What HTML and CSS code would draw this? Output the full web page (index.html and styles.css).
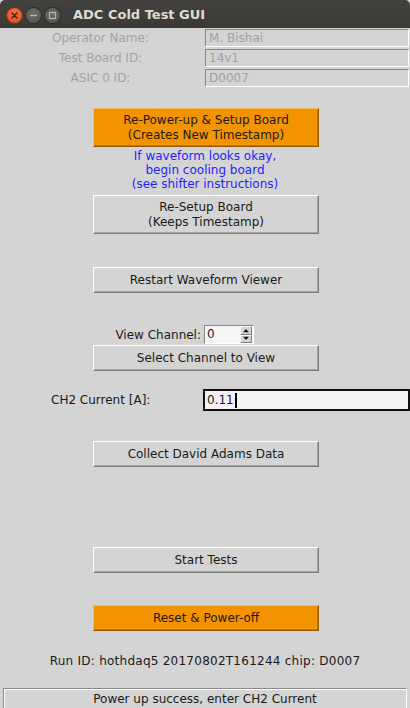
FILE: index.html
```html
<!DOCTYPE html>
<html>
<head>
<meta charset="utf-8">
<link rel="stylesheet" href="styles.css">
</head>
<body>
<div class="window">
  <header class="titlebar">
    <div class="winbtns">
      <span class="wb close"><svg width="15" height="15" viewBox="0 0 15 15"><path d="M5 5 L10 10 M10 5 L5 10" stroke="#3a1a10" stroke-width="1.3" stroke-linecap="round"/></svg></span>
      <span class="wb"><svg width="15" height="15" viewBox="0 0 15 15"><path d="M4 7.5 H11" stroke="#b8b6ae" stroke-width="1.4"/></svg></span>
      <span class="wb"><svg width="15" height="15" viewBox="0 0 15 15"><rect x="4.5" y="4.5" width="6" height="6" fill="none" stroke="#b8b6ae" stroke-width="1.2"/></svg></span>
    </div>
    <span class="title">ADC Cold Test GUI</span>
  </header>
  <main class="content">
    <div class="form">
      <span class="flabel">Operator Name:</span><div class="entry disabled">M. Bishai</div>
      <span class="flabel">Test Board ID:</span><div class="entry disabled">14v1</div>
      <span class="flabel">ASIC 0 ID:</span><div class="entry disabled">D0007</div>
    </div>
    <button class="btn orange tall b1">Re-Power-up &amp; Setup Board<br>(Creates New Timestamp)</button>
    <p class="note">If waveform looks okay,<br>begin cooling board<br>(see shifter instructions)</p>
    <button class="btn tall b2">Re-Setup Board<br>(Keeps Timestamp)</button>
    <button class="btn b3">Restart Waveform Viewer</button>
    <div class="spinrow">
      <span class="spinlabel">View Channel:</span>
      <div class="spinbox">
        <span class="spinval">0</span>
        <span class="arrows">
          <span class="arr"><svg width="10" height="7" viewBox="0 0 10 7"><path d="M1 6 L5 1.5 L9 6 Z" fill="#111"/></svg></span>
          <span class="arr"><svg width="10" height="7" viewBox="0 0 10 7"><path d="M1 1 L5 5.5 L9 1 Z" fill="#111"/></svg></span>
        </span>
      </div>
    </div>
    <button class="btn b4">Select Channel to View</button>
    <div class="currow">
      <span class="curlabel">CH2 Current [A]:</span>
      <div class="entry focus">0.11<span class="caret"></span></div>
    </div>
    <button class="btn b5">Collect David Adams Data</button>
    <button class="btn b6">Start Tests</button>
    <button class="btn orange b7">Reset &amp; Power-off</button>
    <p class="runid">Run ID: hothdaq5 20170802T161244 chip: D0007</p>
    <div class="status">Power up success, enter CH2 Current</div>
  </main>
</div>
</body>
</html>
```

FILE: styles.css
```css
* { box-sizing: border-box; }
html, body { margin: 0; padding: 0; }
body {
  width: 410px;
  height: 708px;
  overflow: hidden;
  background: #d4d4d4;
  font-family: "DejaVu Sans", sans-serif;
  font-size: 12px;
  color: #1a1a1a;
}
.window { display: flex; flex-direction: column; height: 708px; }
.titlebar {
  height: 28px;
  background: linear-gradient(#43423e, #3a3935);
  border-radius: 5px 5px 0 0;
  display: flex;
  align-items: center;
  padding-left: 7px;
  flex-shrink: 0;
}
.winbtns { display: flex; gap: 4px; padding-top: 2px; }
.wb {
  width: 15px; height: 15px;
  border-radius: 50%;
  background: radial-gradient(circle at 50% 35%, #6c6b66, #53524d);
  box-shadow: 0 0 0 1px #2e2d2a;
  display: flex;
}
.wb.close { background: radial-gradient(circle at 50% 35%, #f2774a, #d9471a); box-shadow: 0 0 0 1px #8a2e10; }
.title {
  margin-left: 13px;
  color: #dfdbd2;
  font-weight: bold;
  font-size: 13px;
  padding-top: 1px;
}
.content { display: flex; flex-direction: column; align-items: flex-start; }
.form {
  margin-top: 1px;
  display: grid;
  grid-template-columns: 205px 204px;
  row-gap: 2px;
  width: 410px;
}
.flabel {
  color: #a3a3a3;
  text-align: center;
  line-height: 18px;
  padding-right: 4px;
  white-space: nowrap;
}
.entry {
  height: 18px;
  border: 1px solid;
  border-color: #858585 #ffffff #ffffff #858585;
  padding: 0 3px;
  line-height: 16px;
  font-size: 12px;
}
.entry.disabled { color: #a0a0a0; background: #d4d4d4; }
.btn {
  font-family: "DejaVu Sans", sans-serif;
  font-size: 12px;
  color: #1a1a1a;
  width: 226px;
  height: 26px;
  margin-left: 93px;
  background: #d4d4d4;
  border: 1px solid;
  border-color: #ffffff #7c7c7c #7c7c7c #ffffff;
  box-shadow: inset -1px -1px 0 #a6a6a6;
  padding: 0;
  line-height: 15px;
  text-align: center;
}
.btn.tall { height: 39px; }
.btn.orange {
  background: #f49300;
  border-color: #f8bd63 #8c5800 #8c5800 #f8bd63;
  box-shadow: inset -1px -1px 0 #c77700;
}
.b1 { margin-top: 21px; }
.note {
  margin: 2px 0 0 0;
  width: 410px;
  text-align: center;
  color: #1f1fff;
  line-height: 14px;
}
.b2 { margin-top: 4px; }
.b3 { margin-top: 33px; }
.spinrow {
  margin-top: 32px;
  display: flex;
  align-items: center;
  height: 19px;
}
.spinlabel {
  width: 204px;
  padding-right: 3px;
  text-align: right;
  white-space: nowrap;
}
.spinbox {
  width: 50px; height: 19px;
  background: #f6f6f6;
  border: 1px solid;
  border-color: #858585 #ffffff #ffffff #858585;
  display: flex;
  justify-content: space-between;
  padding-left: 2px;
  line-height: 17px;
}
.arrows { display: flex; flex-direction: column; width: 12px; margin-right: 1px; }
.arr {
  flex: 1;
  background: #d4d4d4;
  border: 1px solid;
  border-color: #fff #7c7c7c #7c7c7c #fff;
  display: flex; align-items: center; justify-content: center;
}
.arr svg { width: 8px; height: 5px; }
.b4 { margin-top: 1px; }
.currow {
  margin-top: 18px;
  display: flex;
  align-items: center;
  padding-left: 51px;
  width: 410px;
}
.curlabel { width: 152px; white-space: nowrap; }
.entry.focus {
  width: 207px;
  height: 22px;
  border: 2px solid #111;
  background: #f4f4f4;
  line-height: 18px;
  padding-left: 2px;
  display: flex; align-items: center;
}
.caret { display: inline-block; width: 2px; height: 15px; background: #000; margin-left: 1px; }
.b5 { margin-top: 30px; }
.b6 { margin-top: 80px; }
.b7 { margin-top: 32px; }
.runid {
  margin: 23px 0 0 0;
  width: 410px;
  text-align: center;
  line-height: 14px;
  letter-spacing: 0.25px;
}
.status {
  margin: 20px 0 0 3px;
  width: 404px;
  height: 22px;
  border: 1px solid;
  border-color: #8a8a8a #ffffff #8a8a8a #8a8a8a;
  box-shadow: inset 1px 1px 0 #ffffff;
  text-align: center;
  line-height: 20px;
  color: #1a1a1a;
}
```
